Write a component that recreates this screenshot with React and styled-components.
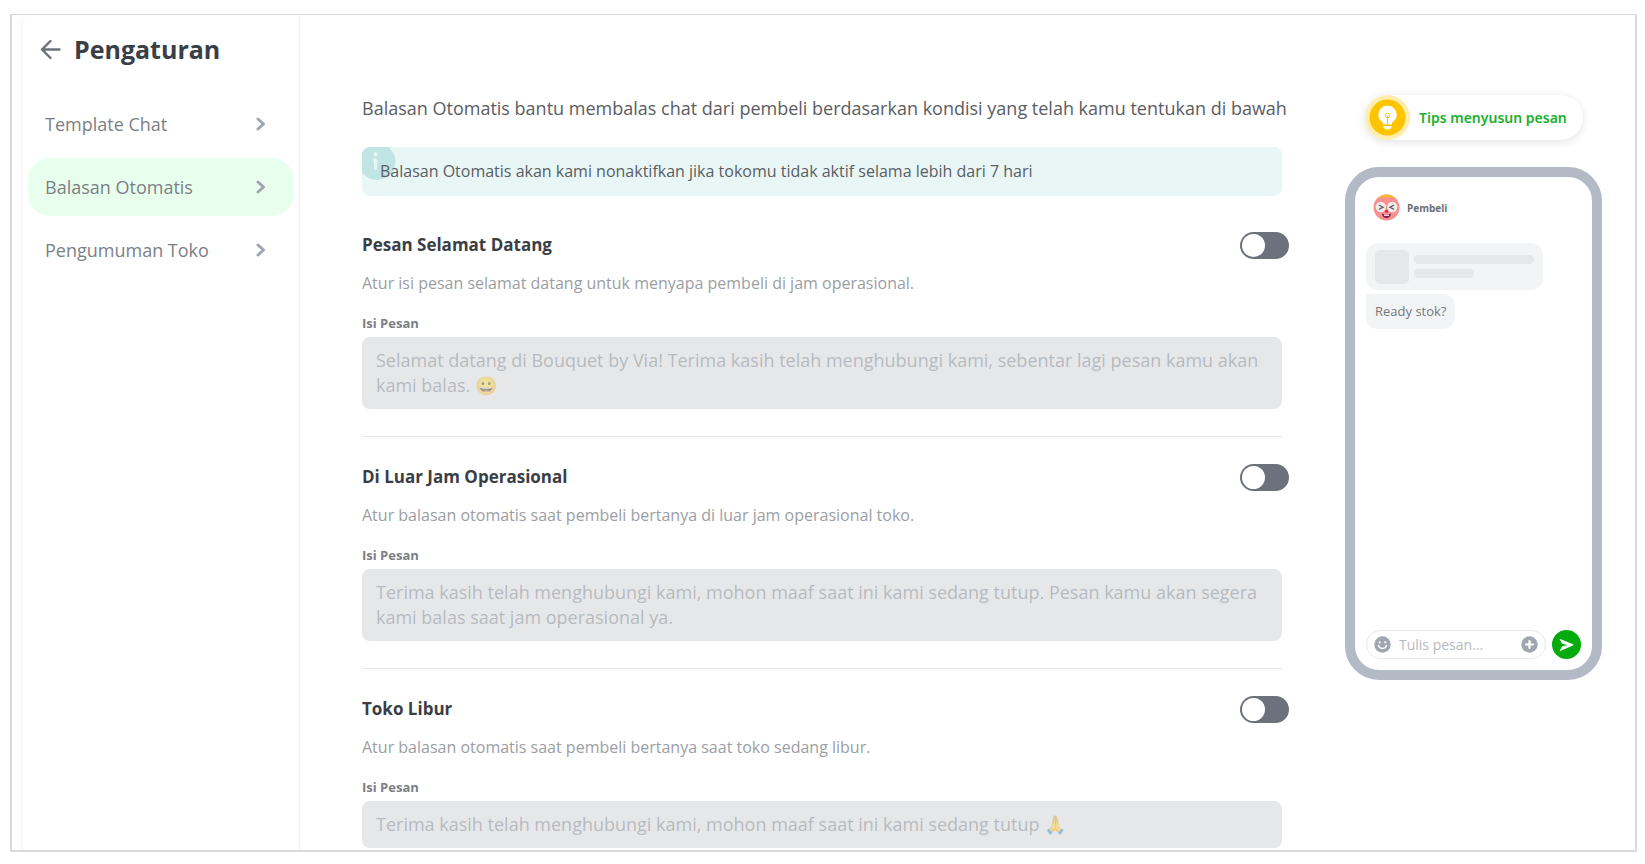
import React, { useState } from "react"
import styled, { createGlobalStyle } from "styled-components"

const GlobalStyle = createGlobalStyle`
  * {
    box-sizing: border-box;
  }
  body {
    margin: 0;
    background: #ffffff;
    color: #5a5d63;
    font-family: "Open Sans", "Noto Sans", sans-serif;
  }
  button, input, textarea {
    font-family: inherit;
  }
`
const Frame = styled.div`
  display: flex;
  margin: 14px 8px 10px 10px;
  padding-left: 10px;
  border: 2px solid #dadada;
  border-top-width: 1px;
`
const Sidebar = styled.aside`
  flex: 0 0 278px;
  padding: 10px 5px;
  border-right: 1px solid #f3f4f5;
  border-left: 1px solid #f6f6f6;
  border-top-left-radius: 8px;
  box-shadow: -3px 0 4px rgba(0, 0, 0, 0.02);
`
const SidebarHead = styled.div`
  display: flex;
  align-items: center;
  gap: 13px;
  height: 48px;
  padding-left: 12px;
  margin-bottom: 22px;
`
const BackButton = styled.button`
  display: flex;
  padding: 0;
  border: 0;
  background: none;
  cursor: pointer;
`
const PageTitle = styled.h1`
  margin: 0;
  font-size: 25px;
  line-height: 36px;
  font-weight: 700;
  color: #3a3e45;
`
const Menu = styled.nav`
  display: flex;
  flex-direction: column;
  gap: 5px;
`
const MenuItem = styled.a`
  display: flex;
  align-items: center;
  justify-content: space-between;
  height: 58px;
  padding: 0 28px 0 17px;
  border-radius: 22px;
  font-size: 18px;
  color: #7b7f85;
  text-decoration: none;
  background: ${(props) => (props.$active ? "#e9ffee" : "transparent")};
`
const Main = styled.main`
  flex: 1;
  min-width: 0;
  padding: 80px 63px 2px 62px;
`
const Intro = styled.p`
  margin: 0 0 26px;
  font-size: 18px;
  line-height: 26px;
  white-space: nowrap;
`
const Alert = styled.div`
  position: relative;
  overflow: hidden;
  margin-bottom: 9px;
  padding: 12px 18px;
  border-radius: 8px;
  background: #e9f6f6;
  font-size: 16px;
  line-height: 25px;
`
const AlertText = styled.span`
  position: relative;
`
const AlertIcon = styled.svg`
  position: absolute;
  top: 0;
  left: 0;
`
const Section = styled.section`
  padding: 26px 0 27px;
  border-bottom: 1px solid #e5e7e9;

  &:last-child {
    padding-bottom: 0;
    border-bottom: 0;
  }
`
const SectionHead = styled.div`
  display: flex;
  align-items: flex-end;
  justify-content: space-between;
  margin-right: -7px;
  margin-bottom: 12px;
`
const SectionTitle = styled.h2`
  margin: 0;
  font-size: 17px;
  line-height: 28px;
  font-weight: 700;
  color: #3a3e45;
`
const Switch = styled.input`
  appearance: none;
  width: 49px;
  height: 27px;
  margin: 0;
  padding: 2px;
  border-radius: 14px;
  background: ${(props) => (props.checked ? "#03ac0e" : "#6c727c")};
  cursor: pointer;

  &::before {
    content: "";
    display: block;
    width: 23px;
    height: 23px;
    margin-left: ${(props) => (props.checked ? "22px" : "0")};
    border-radius: 50%;
    background: #ffffff;
  }
`
const Description = styled.p`
  margin: 0 0 18px;
  font-size: 16px;
  line-height: 24px;
  color: #9b9ea3;
`
const Label = styled.label`
  display: block;
  margin-bottom: 4px;
  font-size: 13px;
  line-height: 20px;
  font-weight: 700;
  color: #7b7f85;
`
const Message = styled.textarea`
  display: block;
  width: 100%;
  padding: 11px 14px;
  border: 0;
  border-radius: 8px;
  background: #e5e7e9;
  color: rgba(115, 120, 130, 0.42);
  font-size: 18px;
  line-height: 25px;
  resize: none;
  overflow: hidden;
`
const Preview = styled.aside`
  flex: 0 0 257px;
  min-width: 0;
  margin: 80px 33px 0 0;
`
const TipsButton = styled.button`
  display: flex;
  align-items: center;
  gap: 9px;
  height: 45px;
  margin: 0 0 27px 20px;
  padding: 0 16px 0 0;
  border: 0;
  border-radius: 23px;
  background: #ffffff;
  box-shadow: 0 2px 8px rgba(49, 53, 59, 0.14);
  color: #20b02c;
  font-family: "Noto Sans", sans-serif;
  font-size: 14px;
  font-weight: 600;
  white-space: nowrap;
  cursor: pointer;
`
const Phone = styled.div`
  display: flex;
  flex-direction: column;
  height: 513px;
  padding: 17px 11px 11px;
  border: 10px solid #b3bac5;
  border-radius: 34px;
`
const Buyer = styled.div`
  display: flex;
  align-items: center;
  gap: 7px;
  padding-left: 7px;
  margin-bottom: 22px;
  color: #6c6f75;
  font-size: 10px;
  font-weight: 700;
`
const ProductCard = styled.div`
  display: flex;
  align-items: center;
  gap: 5px;
  width: 177px;
  height: 47px;
  padding: 0 9px;
  margin-bottom: 4px;
  border-radius: 12px;
  background: #f2f4f5;
`
const Thumb = styled.div`
  width: 34px;
  height: 34px;
  border-radius: 5px;
  background: #e5e7e9;
`
const Lines = styled.div`
  flex: 1;
  display: flex;
  flex-direction: column;
  gap: 5px;
`
const Line = styled.div`
  width: ${(props) => props.$width};
  height: 9px;
  border-radius: 5px;
  background: #e5e7e9;
`
const Bubble = styled.div`
  align-self: flex-start;
  padding: 5px 9px;
  border-radius: 0 12px 12px 12px;
  background: #f2f4f5;
  color: #75787e;
  font-size: 13px;
  line-height: 25px;
`
const Composer = styled.form`
  display: flex;
  align-items: center;
  gap: 6px;
  margin-top: auto;
`
const ComposerField = styled.div`
  flex: 1;
  min-width: 0;
  display: flex;
  align-items: center;
  gap: 8px;
  height: 29px;
  padding: 0 7px;
  border: 1px solid #e8e9eb;
  border-radius: 15px;
`
const ComposerInput = styled.input`
  flex: 1;
  width: 100%;
  min-width: 0;
  padding: 0;
  border: 0;
  outline: 0;
  background: none;
  font-size: 14px;

  &::placeholder {
    color: #b7babf;
    opacity: 1;
  }
`
const IconButton = styled.button`
  display: flex;
  padding: 0;
  border: 0;
  background: none;
  cursor: pointer;
`
const SendButton = styled.button`
  display: flex;
  align-items: center;
  justify-content: center;
  width: 29px;
  height: 29px;
  padding: 0;
  border: 0;
  border-radius: 50%;
  background: #03ac0e;
  cursor: pointer;
`

const menu = ["Template Chat", "Balasan Otomatis", "Pengumuman Toko"]

const sections = [
  {
    id: "welcome",
    title: "Pesan Selamat Datang",
    description: "Atur isi pesan selamat datang untuk menyapa pembeli di jam operasional.",
    message:
      "Selamat datang di Bouquet by Via! Terima kasih telah menghubungi kami, sebentar lagi pesan kamu akan kami balas. 😀",
    rows: 2,
  },
  {
    id: "closed",
    title: "Di Luar Jam Operasional",
    description: "Atur balasan otomatis saat pembeli bertanya di luar jam operasional toko.",
    message:
      "Terima kasih telah menghubungi kami, mohon maaf saat ini kami sedang tutup. Pesan kamu akan segera kami balas saat jam operasional ya.",
    rows: 2,
  },
  {
    id: "holiday",
    title: "Toko Libur",
    description: "Atur balasan otomatis saat pembeli bertanya saat toko sedang libur.",
    message: "Terima kasih telah menghubungi kami, mohon maaf saat ini kami sedang tutup 🙏",
    rows: 1,
  },
]

const ArrowLeft = () => (
  <svg width="21" height="20" viewBox="0 0 21 20" fill="none" stroke="#6c727c" strokeWidth="2.4" strokeLinecap="round" strokeLinejoin="round">
    <path d="M19.5 10.5H2M10.5 2L2 10.5L10.500 19" />
  </svg>
)

const Chevron = () => (
  <svg width="10" height="14" viewBox="0 0 10 14" fill="none" stroke="#9fa6b0" strokeWidth="3" strokeLinecap="round" strokeLinejoin="round">
    <path d="M2 2L7.500 7L2 12" />
  </svg>
)

const Bulb = () => (
  <svg width="45" height="45" viewBox="0 0 45 45">
    <circle cx="22.5" cy="22.5" r="22.5" fill="#ffeeb0" />
    <circle cx="22.5" cy="22.5" r="18" fill="#ffc400" />
    <path d="M22.5 10.5a9.2 9.2 0 0 0-9.2 9.2c0 3.6 2 5.7 3.9 7.2.7.6.9 1.3.9 2.6h8.8c0-1.3.2-2 .9-2.6 1.9-1.5 3.9-3.6 3.9-7.2a9.2 9.2 0 0 0-9.2-9.2z" fill="#fff" />
    <path d="M18.2 31h8.6c-.3 2.2-2 3.5-4.3 3.5s-4-1.3-4.3-3.5z" fill="#fff" />
    <circle cx="22.5" cy="20.5" r="2.3" fill="none" stroke="#ffc400" strokeWidth="1" />
    <path d="M22.5 20.5v9.5M19.5 30.2h6" stroke="#ffc400" strokeWidth="1" />
  </svg>
)

const Avatar = () => (
  <svg width="27" height="27" viewBox="0 0 27 27">
    <circle cx="13.5" cy="13.5" r="13" fill="#fb8f90" />
    <path d="M4.5 4.2C7 1.7 10 .5 13.5.5s6.500 1.200 9 3.700c-2.500-.4-4-.2-6-1.200-2 1-4 1-6 0-2 1-3.500.8-6 1.200z" fill="#f5b92f" />
    <circle cx="7.8" cy="13" r="5.2" fill="#f1ebeb" />
    <circle cx="19.2" cy="13" r="5.2" fill="#f1ebeb" />
    <path d="M6 11l4 2.3-4 2M21 11l-4 2.300 4 2" fill="none" stroke="#6b6267" strokeWidth="1.4" />
    <circle cx="13.5" cy="17.2" r="1.5" fill="#d9232e" />
    <path d="M8.8 19.6c3 1.200 6.400 1.200 9.400 0-.5 3-2.200 4.600-4.700 4.600s-4.200-1.600-4.700-4.600z" fill="#8d1f45" />
    <path d="M11 20.6h5v1.2h-5z" fill="#fff" />
  </svg>
)

const Smiley = () => (
  <svg width="17" height="17" viewBox="0 0 17 17">
    <circle cx="8.5" cy="8.5" r="8.2" fill="#9fa6b0" />
    <circle cx="5.7" cy="6.3" r="1.1" fill="#fff" />
    <circle cx="11.3" cy="6.3" r="1.1" fill="#fff" />
    <path d="M4.5 9.5c.7 2 2.200 3 4 3s3.300-1 4-3" fill="none" stroke="#fff" strokeWidth="1.4" strokeLinecap="round" />
  </svg>
)

const Plus = () => (
  <svg width="17" height="17" viewBox="0 0 17 17">
    <circle cx="8.5" cy="8.5" r="8.2" fill="#9fa6b0" />
    <path d="M8.5 5v7M5 8.5h7" stroke="#fff" strokeWidth="2.2" strokeLinecap="round" />
  </svg>
)

const Send = () => (
  <svg width="15" height="12" viewBox="0 0 15 12">
    <path d="M.8.6c-.3-.4 0-.7.5-.5l12.600 5.200c.7.3.7 1 0 1.300L1.300 11.900c-.5.2-.8-.1-.5-.5L3.200 7.200 8.500 6 3.200 4.800z" fill="#fff" />
  </svg>
)

const AutoReply = ({ section }) => {
  const [enabled, setEnabled] = useState(false)
  return (
    <Section>
      <SectionHead>
        <SectionTitle id={section.id + "-title"}>{section.title}</SectionTitle>
        <Switch
          type="checkbox"
          role="switch"
          aria-labelledby={section.id + "-title"}
          checked={enabled}
          onChange={() => setEnabled(!enabled)}
        />
      </SectionHead>
      <Description>{section.description}</Description>
      <Label htmlFor={section.id}>Isi Pesan</Label>
      <Message id={section.id} rows={section.rows} defaultValue={section.message} disabled={!enabled} />
    </Section>
  )
}

const App = () => {
  return (
    <>
      <GlobalStyle />
      <Frame>
        <Sidebar>
          <SidebarHead>
            <BackButton type="button" aria-label="Kembali">
              <ArrowLeft />
            </BackButton>
            <PageTitle>Pengaturan</PageTitle>
          </SidebarHead>
          <Menu>
            {menu.map((item) => (
              <MenuItem key={item} href="#" $active={item === "Balasan Otomatis"}>
                {item}
                <Chevron />
              </MenuItem>
            ))}
          </Menu>
        </Sidebar>
        <Main>
          <Intro>
            Balasan Otomatis bantu membalas chat dari pembeli berdasarkan kondisi yang telah kamu tentukan di bawah
          </Intro>
          <Alert>
            <AlertIcon width="34" height="34" viewBox="0 0 34 34">
              <circle cx="15" cy="14.5" r="18.5" fill="#c1e4e4" />
              <circle cx="13.5" cy="7.5" r="2" fill="#e9f6f6" />
              <path d="M12.5 13h1v8.5" fill="none" stroke="#e9f6f6" strokeWidth="3" strokeLinecap="round" strokeLinejoin="round" />
            </AlertIcon>
            <AlertText>Balasan Otomatis akan kami nonaktifkan jika tokomu tidak aktif selama lebih dari 7 hari</AlertText>
          </Alert>
          {sections.map((section) => (
            <AutoReply key={section.id} section={section} />
          ))}
        </Main>
        <Preview>
          <TipsButton type="button">
            <Bulb />
            Tips menyusun pesan
          </TipsButton>
          <Phone>
            <Buyer>
              <Avatar />
              Pembeli
            </Buyer>
            <ProductCard>
              <Thumb />
              <Lines>
                <Line $width="100%" />
                <Line $width="50%" />
              </Lines>
            </ProductCard>
            <Bubble>Ready stok?</Bubble>
            <Composer onSubmit={(e) => e.preventDefault()}>
              <ComposerField>
                <IconButton type="button" aria-label="Emoji">
                  <Smiley />
                </IconButton>
                <ComposerInput aria-label="Tulis pesan" placeholder="Tulis pesan..." />
                <IconButton type="button" aria-label="Lampiran">
                  <Plus />
                </IconButton>
              </ComposerField>
              <SendButton type="submit" aria-label="Kirim">
                <Send />
              </SendButton>
            </Composer>
          </Phone>
        </Preview>
      </Frame>
    </>
  )
}

export default App
